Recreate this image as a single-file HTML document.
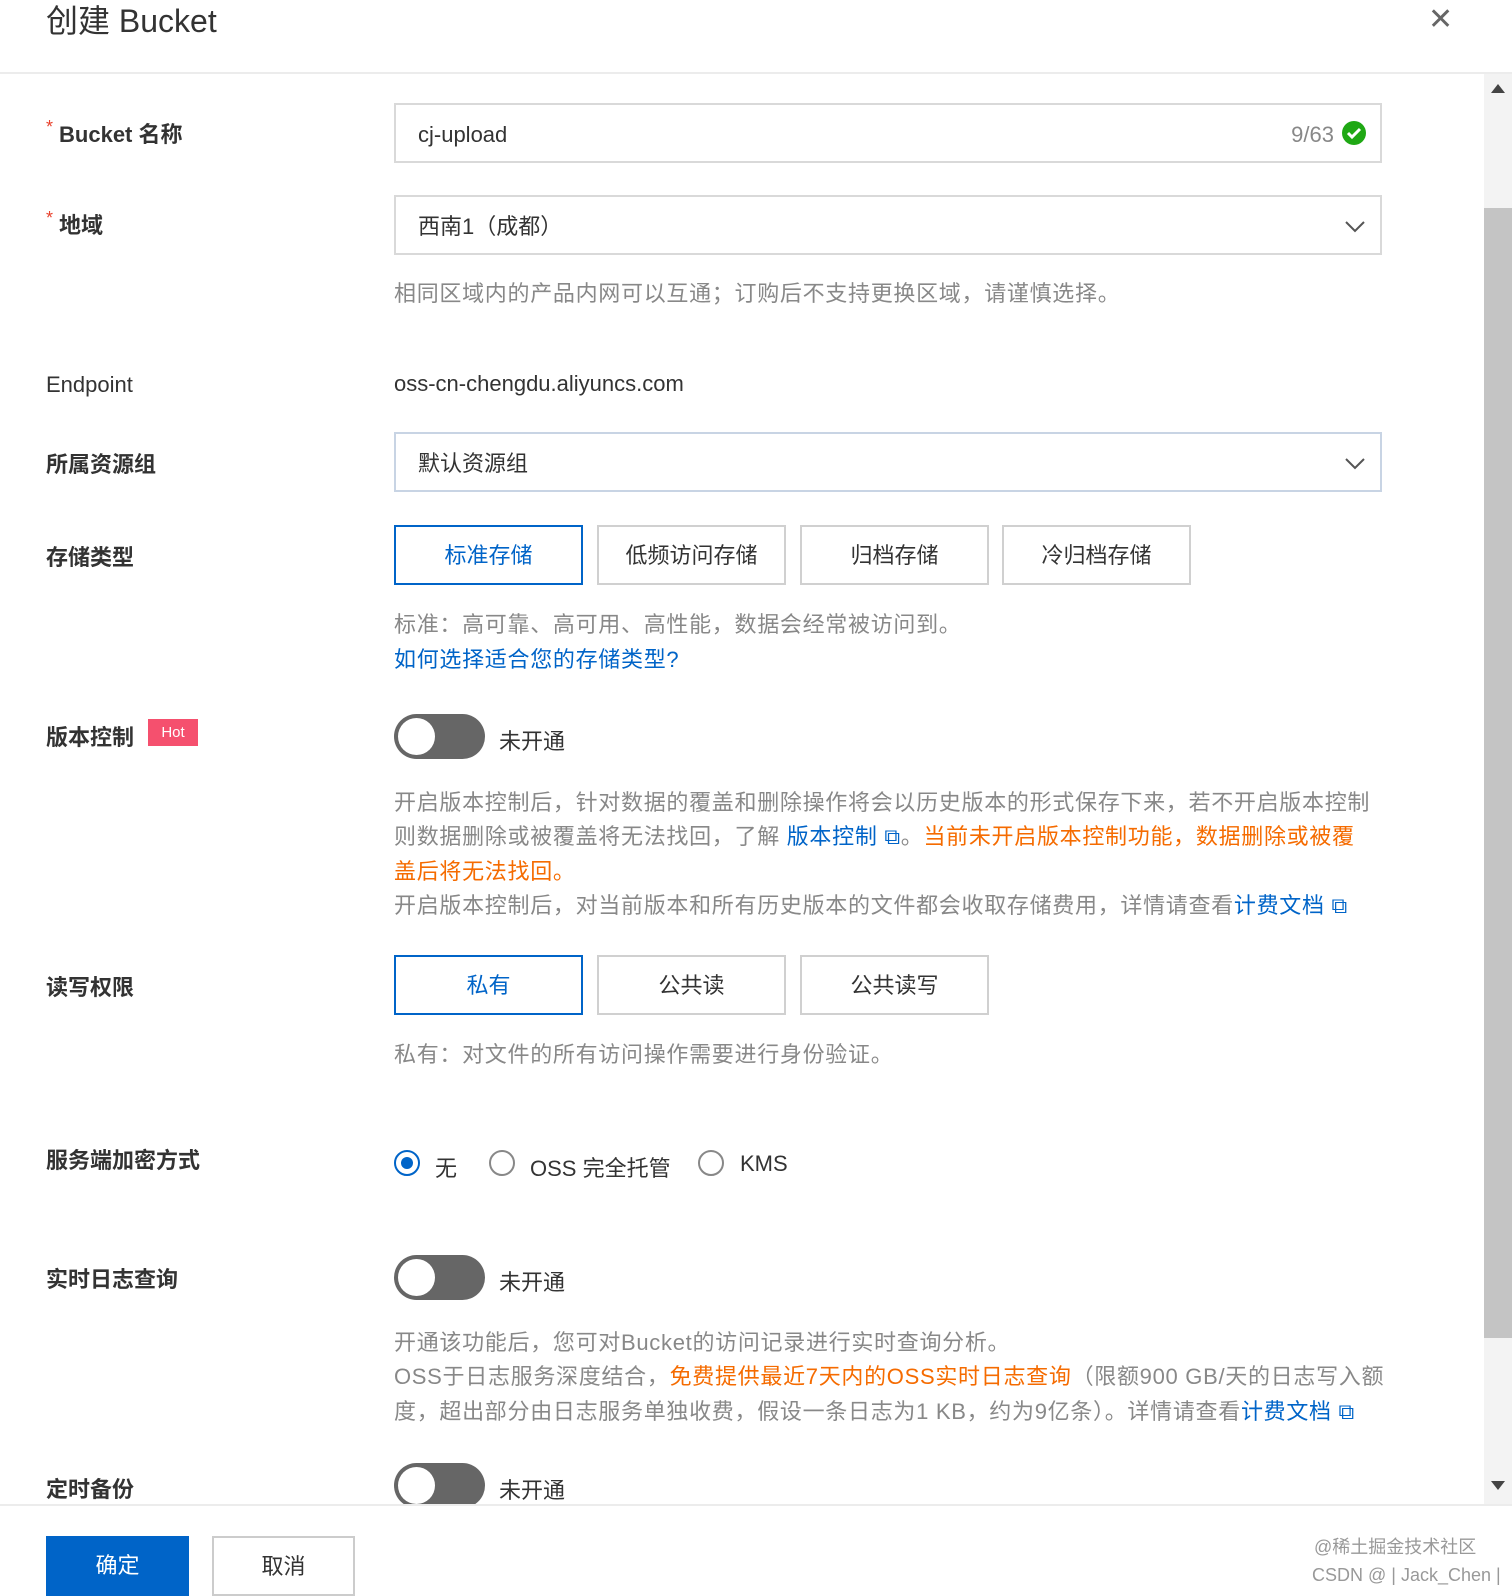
<!DOCTYPE html>
<html><head><meta charset="utf-8"><style>
*{margin:0;padding:0;box-sizing:border-box}
body{width:1512px;height:1591px;overflow:hidden;background:#fff;font-family:"Liberation Sans","Noto Sans CJK SC",sans-serif;color:#333;position:relative}
.a{position:absolute;white-space:nowrap}
.lbl{position:absolute;left:46px;font-size:22px;font-weight:bold;color:#333}
.star{color:#e8412c;font-weight:normal;margin-right:6px;font-size:18px;vertical-align:top}
.inp{position:absolute;left:394px;width:988px;height:60px;border:2px solid #d9d9d9;font-size:22px;padding-left:22px;line-height:60px;color:#333}
.hint{position:absolute;left:394px;font-size:22px;color:#888;white-space:nowrap;letter-spacing:0.7px}
.btn{position:absolute;width:189px;height:60px;border:2px solid #d0d0d0;font-size:22px;text-align:center;line-height:58px;color:#333}
.btn.on{border-color:#0064c8;color:#0064c8}
.tg{position:absolute;left:394px;width:91px;height:45px;border-radius:23px;background:#666}
.tg::after{content:"";position:absolute;left:4px;top:4px;width:37px;height:37px;border-radius:50%;background:#fff}
.tgt{position:absolute;left:499px;font-size:22px;color:#333}
.blue{color:#0064c8}.or{color:#f56b00}
.chev{position:absolute;right:14px;top:18px}
.radio{position:absolute;width:26px;height:26px;border-radius:50%;border:2px solid #888}
</style></head><body>
<div class="a" style="left:46px;top:-4px;font-size:32px;color:#333">创建 Bucket</div>
<div class="a" style="left:1428px;top:2px;font-size:30px;color:#666">✕</div>
<div class="a" style="left:0;top:72px;width:1512px;height:2px;background:#ececec"></div>
<div class="a" style="left:1484px;top:74px;width:28px;height:1430px;background:#f3f3f3"></div>
<div class="a" style="left:1484px;top:208px;width:28px;height:1130px;background:#c4c4c4"></div>
<div class="a" style="left:1491px;top:84px;width:0;height:0;border-left:7px solid transparent;border-right:7px solid transparent;border-bottom:9px solid #444"></div>
<div class="a" style="left:1491px;top:1481px;width:0;height:0;border-left:7px solid transparent;border-right:7px solid transparent;border-top:9px solid #444"></div>

<div class="lbl" style="top:117px"><span class="star">*</span>Bucket 名称</div>
<div class="inp" style="top:103px">cj-upload<span style="position:absolute;right:46px;color:#888">9/63</span>
<svg style="position:absolute;right:14px;top:16px" width="24" height="24"><circle cx="12" cy="12" r="12" fill="#1fa814"/><path d="M6 12l4 4 8-8" stroke="#fff" stroke-width="3" fill="none"/></svg></div>

<div class="lbl" style="top:208px"><span class="star">*</span>地域</div>
<div class="inp" style="top:195px">西南1（成都）<svg class="chev" width="22" height="22"><path d="M2 7l9 9 9-9" stroke="#555" stroke-width="2" fill="none"/></svg></div>
<div class="hint" style="top:276px">相同区域内的产品内网可以互通；订购后不支持更换区域，请谨慎选择。</div>

<div class="lbl" style="top:372px;font-weight:normal">Endpoint</div>
<div class="a" style="left:394px;top:371px;font-size:22px;color:#333">oss-cn-chengdu.aliyuncs.com</div>

<div class="lbl" style="top:447px">所属资源组</div>
<div class="inp" style="top:432px;border-color:#c8d4e4">默认资源组<svg class="chev" width="22" height="22"><path d="M2 7l9 9 9-9" stroke="#555" stroke-width="2" fill="none"/></svg></div>

<div class="lbl" style="top:540px">存储类型</div>
<div class="btn on" style="left:394px;top:525px">标准存储</div>
<div class="btn" style="left:597px;top:525px">低频访问存储</div>
<div class="btn" style="left:800px;top:525px">归档存储</div>
<div class="btn" style="left:1002px;top:525px">冷归档存储</div>
<div class="hint" style="top:607px">标准：高可靠、高可用、高性能，数据会经常被访问到。</div>
<div class="hint blue" style="top:642px">如何选择适合您的存储类型?</div>

<div class="lbl" style="top:720px">版本控制</div>
<div class="a" style="left:148px;top:719px;width:50px;height:27px;background:#f5506e;color:#fff;font-size:15px;text-align:center;line-height:27px">Hot</div>
<div class="tg" style="top:714px"></div><div class="tgt" style="top:724px">未开通</div>
<div class="hint" style="top:785px">开启版本控制后，针对数据的覆盖和删除操作将会以历史版本的形式保存下来，若不开启版本控制</div>
<div class="hint" style="top:819px">则数据删除或被覆盖将无法找回，了解 <span class="blue">版本控制 ⧉</span>。<span class="or">当前未开启版本控制功能，数据删除或被覆</span></div>
<div class="hint or" style="top:854px">盖后将无法找回。</div>
<div class="hint" style="top:888px">开启版本控制后，对当前版本和所有历史版本的文件都会收取存储费用，详情请查看<span class="blue">计费文档 ⧉</span></div>

<div class="lbl" style="top:970px">读写权限</div>
<div class="btn on" style="left:394px;top:955px">私有</div>
<div class="btn" style="left:597px;top:955px">公共读</div>
<div class="btn" style="left:800px;top:955px">公共读写</div>
<div class="hint" style="top:1037px">私有：对文件的所有访问操作需要进行身份验证。</div>

<div class="lbl" style="top:1143px">服务端加密方式</div>
<div class="radio" style="left:394px;top:1150px;border-color:#0064c8"><div style="position:absolute;left:5px;top:5px;width:12px;height:12px;border-radius:50%;background:#0064c8"></div></div>
<div class="a" style="left:435px;top:1151px;font-size:22px">无</div>
<div class="radio" style="left:489px;top:1150px"></div>
<div class="a" style="left:530px;top:1151px;font-size:22px">OSS 完全托管</div>
<div class="radio" style="left:698px;top:1150px"></div>
<div class="a" style="left:740px;top:1151px;font-size:22px">KMS</div>

<div class="lbl" style="top:1262px">实时日志查询</div>
<div class="tg" style="top:1255px"></div><div class="tgt" style="top:1265px">未开通</div>
<div class="hint" style="top:1325px">开通该功能后，您可对Bucket的访问记录进行实时查询分析。</div>
<div class="hint" style="top:1359px">OSS于日志服务深度结合，<span class="or">免费提供最近7天内的OSS实时日志查询</span>（限额900 GB/天的日志写入额</div>
<div class="hint" style="top:1394px">度，超出部分由日志服务单独收费，假设一条日志为1 KB，约为9亿条）。详情请查看<span class="blue">计费文档 ⧉</span></div>

<div class="lbl" style="top:1472px">定时备份</div>
<div style="position:absolute;left:0;top:1460px;width:1484px;height:44px;overflow:hidden"><div class="tg" style="top:3px"></div><div class="tgt" style="top:13px">未开通</div></div>

<div class="a" style="left:0;top:1504px;width:1512px;height:2px;background:#ececec"></div>
<div class="a" style="left:46px;top:1536px;width:143px;height:60px;background:#0064c8;color:#fff;font-size:22px;text-align:center;line-height:60px">确定</div>
<div class="a" style="left:212px;top:1536px;width:143px;height:60px;border:2px solid #ccc;font-size:22px;text-align:center;line-height:58px">取消</div>
<div class="a" style="left:1314px;top:1533px;font-size:18px;color:#999">@稀土掘金技术社区</div>
<div class="a" style="left:1312px;top:1565px;font-size:18px;color:#999">CSDN @ | Jack_Chen |</div>
</body></html>
